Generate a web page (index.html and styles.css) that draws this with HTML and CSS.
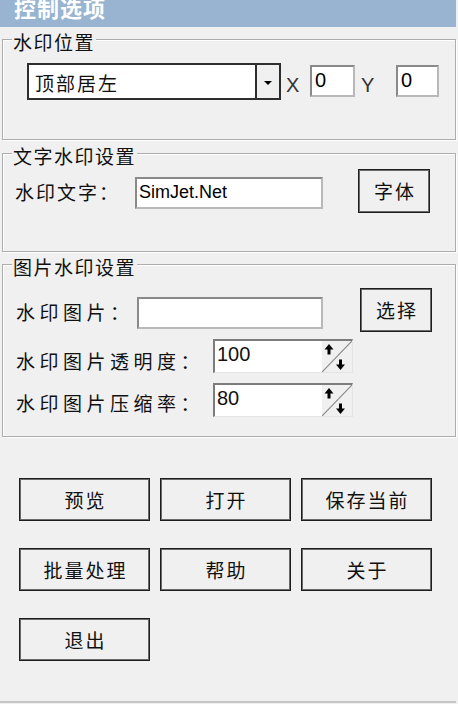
FILE: index.html
```html
<!DOCTYPE html>
<html lang="zh-CN">
<head>
<meta charset="utf-8">
<title>控制选项</title>
<link rel="stylesheet" href="styles.css">
</head>
<body>
<div class="window">
  <div class="titlebar"><span class="title">控制选项</span></div>

  <fieldset class="group g-pos">
    <legend>水印位置</legend>
    <div class="row r-pos">
      <div class="combo">
        <span class="combo-text">顶部居左</span>
        <span class="combo-btn"><svg width="8" height="4" viewBox="0 0 8 4"><polygon points="0,0 8,0 4,4" fill="#000"/></svg></span>
      </div>
      <span class="axis ax-x">X</span>
      <div class="field num fx">0</div>
      <span class="axis ax-y">Y</span>
      <div class="field num fy">0</div>
    </div>
  </fieldset>

  <fieldset class="group g-text">
    <legend>文字水印设置</legend>
    <div class="row r-in">
      <span class="label lbl-text">水印文字：</span>
      <div class="field txt in-text">SimJet.Net</div>
      <button class="btn side-btn b-font">字体</button>
    </div>
  </fieldset>

  <fieldset class="group g-pic">
    <legend>图片水印设置</legend>
    <div class="row r-in">
      <span class="label lbl-pic">水印图片：</span>
      <div class="field txt in-pic"></div>
      <button class="btn side-btn b-sel">选择</button>
    </div>
    <div class="row r-in r-alpha">
      <span class="label lbl-spin l-alpha">水印图片透明度：</span>
      <div class="spin">
        <span class="spin-text">100</span>
        <span class="spin-btn"><svg width="30" height="31" viewBox="0 0 30 31"><line x1="0" y1="31" x2="30" y2="0" stroke="#8a8a8a" stroke-width="1.2"/><polygon points="2.5,8.5 7,3 11.5,8.5" fill="#000"/><rect x="5.5" y="8" width="3" height="5.5" fill="#000"/><rect x="17" y="18.5" width="3" height="5.5" fill="#000"/><polygon points="14,23.5 23,23.5 18.5,29" fill="#000"/></svg></span>
      </div>
    </div>
    <div class="row r-in r-zoom">
      <span class="label lbl-spin l-zoom">水印图片压缩率：</span>
      <div class="spin">
        <span class="spin-text">80</span>
        <span class="spin-btn"><svg width="30" height="31" viewBox="0 0 30 31"><line x1="0" y1="31" x2="30" y2="0" stroke="#8a8a8a" stroke-width="1.2"/><polygon points="2.5,8.5 7,3 11.5,8.5" fill="#000"/><rect x="5.5" y="8" width="3" height="5.5" fill="#000"/><rect x="17" y="18.5" width="3" height="5.5" fill="#000"/><polygon points="14,23.5 23,23.5 18.5,29" fill="#000"/></svg></span>
      </div>
    </div>
  </fieldset>

  <div class="actions">
    <button class="btn act">预览</button>
    <button class="btn act">打开</button>
    <button class="btn act">保存当前</button>
    <button class="btn act">批量处理</button>
    <button class="btn act">帮助</button>
    <button class="btn act">关于</button>
    <button class="btn act">退出</button>
  </div>

  <div class="statusbar"></div>
</div>
</body>
</html>
```
FILE: styles.css
```css
html, body {
  margin: 0;
  padding: 0;
  background: #f0f0f0;
}
body {
  width: 458px;
  height: 704px;
  overflow: hidden;
  font-family: "Noto Sans CJK SC", "Noto Sans", sans-serif;
  color: #111;
}
.window {
  width: 458px;
}
.titlebar {
  width: 456px;
  height: 27px;
  background: #99b4d1;
  overflow: hidden;
}
.title {
  display: block;
  margin-top: -4px;
  padding-left: 14px;
  font-size: 22px;
  line-height: 22px;
  font-weight: 700;
  color: #fff;
  letter-spacing: 1px;
}

/* group boxes */
.group {
  margin: 0 2px 0 2px;
  padding: 0;
  min-width: 0;
  border: 1px solid #acacac;
  box-shadow: 1px 1px 0 #fff, inset 1px 1px 0 #fff;
}
.group legend {
  margin-left: 9px;
  padding: 6px 1px 0 1px;
  font-size: 19px;
  line-height: 16px;
  letter-spacing: 1.5px;
  background: #f0f0f0;
}
.g-pos {
  margin-top: 1px;
  padding: 13px 0 39px 0;
}
.g-text {
  margin-top: 2px;
  padding: 5px 0 38px 0;
}
.g-pic {
  margin-top: 1px;
  padding: 13px 0 19px 0;
}

.row {
  display: flex;
  align-items: flex-start;
}
.r-pos { margin-left: 24px; }
.r-in { margin-left: 12px; }
.r-alpha { margin-top: 7px; }
.r-zoom { margin-top: 10px; }

/* combo box */
.combo {
  box-sizing: border-box;
  width: 254px;
  height: 37px;
  border: 2px solid #2e2e2e;
  background: #fff;
  display: flex;
}
.combo-text {
  flex: 1;
  padding: 4px 0 0 6px;
  font-size: 19px;
  line-height: 27px;
  letter-spacing: 2px;
}
.combo-btn {
  width: 24px;
  border-left: 2px solid #2e2e2e;
  background: #f0f0f0;
  display: flex;
  align-items: center;
  justify-content: center;
  padding-top: 2px;
  box-sizing: border-box;
}

.axis {
  box-sizing: border-box;
  font-family: "Liberation Sans", Arial, sans-serif;
  font-size: 20px;
  line-height: 20px;
  color: #333;
  margin-top: 12px;
}
.ax-x { width: 29px; padding-left: 5px; }
.ax-y { width: 41px; padding-left: 6px; }

/* edit fields */
.field {
  box-sizing: border-box;
  background: #fff;
  border: 2px solid;
  border-color: #8a8a8a #b9b9b9 #b9b9b9 #8a8a8a;
  font-family: "Liberation Sans", Arial, sans-serif;
  color: #000;
}
.num {
  height: 32px;
  margin-top: 2px;
  padding: 3px 0 0 3px;
  font-size: 20px;
  line-height: 20px;
}
.fx { width: 45px; }
.fy { width: 43px; }
.txt {
  height: 32px;
  padding: 3px 0 0 2px;
  font-size: 18px;
  line-height: 20px;
}
.in-text { width: 188px; margin-top: 8px; }
.in-pic { width: 186px; margin-top: 9px; }

.label {
  box-sizing: border-box;
  font-size: 19px;
  line-height: 20px;
  white-space: nowrap;
}
.lbl-text { width: 120px; margin-top: 13px; padding-left: 0; letter-spacing: 2px; }
.lbl-pic { width: 122px; margin-top: 14px; padding-left: 1px; letter-spacing: 4.5px; }
.lbl-spin { width: 198px; padding-left: 1px; letter-spacing: 4.5px; }
.l-alpha { margin-top: 12px; }
.l-zoom { margin-top: 10px; }

/* spin boxes */
.spin {
  box-sizing: border-box;
  width: 140px;
  height: 34px;
  display: flex;
  background: #fff;
  border-style: solid;
  border-width: 2px 1px 1px 2px;
  border-color: #7c7c7c #e4e4e4 #e4e4e4 #7c7c7c;
}
.spin-text {
  flex: 1;
  padding: 3px 0 0 2px;
  font-family: "Liberation Sans", Arial, sans-serif;
  font-size: 20px;
  line-height: 20px;
}
.spin-btn {
  width: 30px;
  height: 31px;
  background: #f0f0f0;
  display: block;
}
.spin-btn svg { display: block; }

/* buttons */
.btn {
  box-sizing: border-box;
  margin: 0;
  background: #f0f0f0;
  border: 1px solid #1e1e1e;
  box-shadow: inset 0 0 0 1px #6a6a6a;
  font-family: "Noto Sans CJK SC", sans-serif;
  font-size: 19px;
  line-height: 20px;
  color: #111;
  padding: 0 0 0 2px;
  letter-spacing: 2px;
  text-align: center;
}
.side-btn {
  width: 72px;
  height: 44px;
}
.b-font { margin-left: 35px; }
.b-sel { margin-left: 37px; }

.actions {
  margin-top: 41px;
  padding-left: 19px;
  display: grid;
  grid-template-columns: 131px 131px 131px;
  grid-auto-rows: 43px;
  column-gap: 10px;
  row-gap: 27px;
}
.act {
  width: 131px;
  height: 43px;
}

.statusbar {
  margin-top: 40px;
  width: 456px;
  border-top: 2px solid #c6c6c6;
}
```
